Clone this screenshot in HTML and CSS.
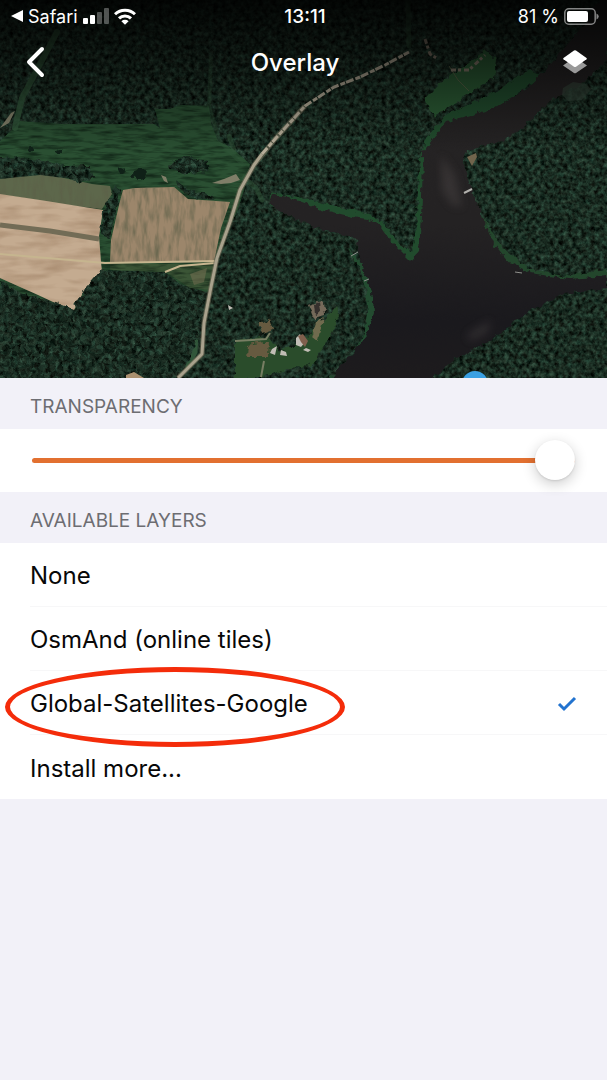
FILE: index.html
```html
<!DOCTYPE html>
<html lang="en">
<head>
<meta charset="utf-8">
<meta name="viewport" content="width=device-width, initial-scale=1">
<title>Overlay</title>
<link rel="stylesheet" href="styles.css">
</head>
<body>
<header class="hero">
  <svg class="map" viewBox="0 0 607 378" preserveAspectRatio="xMidYMid slice" aria-hidden="true">
    <defs>
      <filter id="trees" x="0" y="0" width="100%" height="100%" color-interpolation-filters="sRGB">
        <feTurbulence type="fractalNoise" baseFrequency="0.22" numOctaves="3" seed="8"/>
        <feColorMatrix values="0.06 0.3 0 0 -0.08  0 0.46 0 0 -0.06  0 0.38 0 0 -0.06  0 0 0 0 1"/>
        <feGaussianBlur stdDeviation="0.5"/>
        <feComposite in2="SourceGraphic" operator="in"/>
      </filter>
      <filter id="grass" x="0" y="0" width="100%" height="100%" color-interpolation-filters="sRGB">
        <feTurbulence type="fractalNoise" baseFrequency="0.05 0.28" numOctaves="3" seed="3" result="n"/>
        <feColorMatrix in="n" values="0 0 0 0 0.04  0 0 0 0 0.1  0 0 0 0 0.06  1.6 0 0 0 -0.66" result="d"/>
        <feComposite in="d" in2="SourceGraphic" operator="in" result="c"/>
        <feMerge><feMergeNode in="SourceGraphic"/><feMergeNode in="c"/></feMerge>
      </filter>
      <filter id="soil" x="0" y="0" width="100%" height="100%" color-interpolation-filters="sRGB">
        <feTurbulence type="fractalNoise" baseFrequency="0.025 0.1" numOctaves="3" seed="12"/>
        <feColorMatrix values="0 0 0 0 0.58  0 0 0 0 0.46  0 0 0 0 0.35  1.3 0 0 0 -0.55" result="d"/>
        <feComposite in="d" in2="SourceGraphic" operator="in" result="c"/>
        <feMerge><feMergeNode in="SourceGraphic"/><feMergeNode in="c"/></feMerge>
      </filter>
      <filter id="crop" x="0" y="0" width="100%" height="100%" color-interpolation-filters="sRGB">
        <feTurbulence type="fractalNoise" baseFrequency="0.2 0.05" numOctaves="3" seed="5"/>
        <feColorMatrix values="0 0 0 0 0.36  0 0 0 0 0.37  0 0 0 0 0.28  1.5 0 0 0 -0.6" result="d"/>
        <feComposite in="d" in2="SourceGraphic" operator="in" result="c"/>
        <feMerge><feMergeNode in="SourceGraphic"/><feMergeNode in="c"/></feMerge>
      </filter>
      <filter id="rough" x="-5%" y="-5%" width="110%" height="110%" color-interpolation-filters="sRGB">
        <feTurbulence type="fractalNoise" baseFrequency="0.16" numOctaves="2" seed="2"/>
        <feDisplacementMap in="SourceGraphic" scale="7" xChannelSelector="R" yChannelSelector="G"/>
      </filter>
      <filter id="soft"><feGaussianBlur stdDeviation="4"/></filter>
      <linearGradient id="shade" x1="0" y1="0" x2="0" y2="1">
        <stop offset="0" stop-color="#000" stop-opacity=".88"/>
        <stop offset=".45" stop-color="#000" stop-opacity=".5"/>
        <stop offset="1" stop-color="#000" stop-opacity="0"/>
      </linearGradient>
      <linearGradient id="depth" x1="0" y1="0" x2="0" y2="1">
        <stop offset="0" stop-color="#262424"/>
        <stop offset=".6" stop-color="#242223"/>
        <stop offset=".85" stop-color="#1a191d"/>
        <stop offset="1" stop-color="#1d1b1d"/>
      </linearGradient>
    </defs>

    <rect width="607" height="378" fill="#14271f" filter="url(#trees)"/>

    <!-- meadow -->
    <g filter="url(#grass)">
      <path fill="#2a4f32" d="M0 141 14 128 20 121 60 124 154 124 160 128 155 109 170 109 180 105 209 106 211 123 218 141 232 148 250 164 244 190 237 212 222 240 212 290 206 292 180 284 165 272 108 270 73 312 66 318 30 306 0 292 0 184 80 177 50 162 0 158Z"/>
    </g>
    <g fill="none" stroke="#31563a" stroke-linecap="round">
      <path stroke-width="6" opacity=".8" d="M57 32 22 98 15 128"/>
      <path stroke-width="4" opacity=".35" d="M211 58 209 106 219 140 242 164"/>
      <path stroke-width="5" opacity=".55" d="M408 0 409 46"/>
      <path stroke-width="5" opacity=".5" d="M244 178 256 188 262 200 M229 136 234 150"/>
      <path stroke-width="5" d="M196 330 195 352 188 366"/>
    </g>
    <path fill="#7f7e68" d="m212 183 12-4 12-5 4 6-9 3-10 1ZM161 175l5 2 2 6-4-2ZM11 113l4-2-6 12-9 5Z"/>

    <!-- farm fields -->
    <path fill="#5d674b" filter="url(#crop)" d="M0 179 40 175 64 178 92 184 110 186 112 194 102 209 60 204 0 194Z"/>
    <path fill="#c4ab90" filter="url(#soil)" d="M0 194 40 200 103 210 99 236 101 262 102 272 85 289 74 310 66 308 38 295 0 278Z"/>
    <path fill="none" stroke="#726c56" stroke-width="5" d="M0 225 50 231 99 239"/>
    <path fill="#9c866b" filter="url(#crop)" d="M123 190 135 188 174 187 188 199 230 202 221 228 214 262 110 263 111 240 119 205Z"/>
    <path fill="#3b5536" filter="url(#grass)" d="M110 264 214 264 211 290 190 288 166 272 110 270Z"/>
    <path fill="#7c7456" d="M190 274 207 268 204 282 194 285Z" opacity=".5"/>
    <path fill="none" stroke="#c6b58f" stroke-width="2" d="M0 254 105 263 216 261 M165 272 180 266 215 263"/>

    <!-- tree lines and hedges -->
    <g filter="url(#rough)">
      <g filter="url(#trees)">
        <path d="M0 158 22 157 43 161 66 166 90 165 94 178 80 183 60 175 35 171 0 176Z"/>
        <path d="M167 165 187 156 207 161 209 172 188 174 170 170Z"/>
        <path d="M176 179 190 191 214 195 213 200 194 198 178 188Z"/>
        <path d="M116 187 120 191 116 212 109 238 101 235 103 211Z"/>
        <path d="M0 282 28 296 55 302 73 309 86 287 102 269 115 273 148 274 163 276 177 288 209 293 200 330 189 359 169 378 0 378Z"/>
      </g>
      <g fill="#0f2017"><ellipse cx="121" cy="170" rx="4" ry="3"/><ellipse cx="139" cy="174" rx="7" ry="5"/><ellipse cx="60" cy="151" rx="3" ry="2"/><ellipse cx="31" cy="150" rx="3" ry="2"/></g>
    </g>
    <path fill="#aa9070" d="M126 375 134 372 144 378 126 378Z"/>

    <!-- shore vegetation and lake -->
    <g filter="url(#rough)">
      <path fill="#214b2d" d="M271 192 305 198 342 208 365 213 384 222 401 246 412 252 417 220 419 164 426 139 446 115 490 94 529 70 543 76 500 105 458 126 430 152 424 180 422 259 414 266 400 260 370 228 330 225 270 207Z"/>
      <path fill="#23462c" d="M461 150 466 190 482 215 502 247 529 269 563 276 607 270 607 279 560 284 525 278 498 260 480 231 463 192Z"/>
      <path fill="#234b30" d="M347 246 362 274 368 305 364 335 342 368 329 378 342 378 368 345 376 310 367 270Z"/>
    </g>
    <path fill="url(#depth)" filter="url(#rough)" d="M273 194 290 198 320 209 353 217 367 219 379 224 390 240 411 261 419 252 422 198 423 152 446 122 492 109 528 88 552 63 578 32 607 -10 607 60 579 86 552 100 522 129 502 141 467 151 463 164 472 192 483 218 494 244 510 263 530 273 569 279 607 276 607 288 564 294 527 312 493 339 457 358 431 380 330 380 351 354 366 336 374 312 372 290 361 263 356 243 359 238 325 231 279 211 269 205Z"/>
    <path fill="#514c4b" filter="url(#soft)" opacity=".4" d="M441 155 455 175 462 207 452 205 442 190Z M468 334 491 320 487 333 469 341Z"/>
    <path fill="#34463a" opacity=".7" d="m563 88 10-6 13 2 5 5-9 11-14 1-6-6Z"/>
    <path fill="#71644c" d="m467 157 9-4 1 4-5 9Z"/>

    <!-- clearing north of the lake -->
    <path fill="#2b5a34" filter="url(#rough)" d="M425 99 450 74 461 68 486 50 496 59 494 78 433 117Z"/>
    <path fill="none" stroke="#546044" d="M449 66 458 80 469 91"/>
    <path fill="none" stroke="#857a6b" stroke-width="3" stroke-dasharray="5 2 3 3" d="M425 39 430 54 438 59 M451 70 469 70 485 55"/>

    <!-- road -->
    <path fill="none" stroke="#6c6a55" stroke-width="5" stroke-linejoin="round" opacity=".7" d="M178 378 191 365 202 354 204 323 211 287 217 258 230 222 240 190 254 165 276 138 305 106"/>
    <path fill="none" stroke="#a8a18c" stroke-width="3" stroke-linejoin="round" d="M178 378 191 365 202 354 204 323 211 287 217 258 230 222 240 190 254 165 262 154"/>
    <path fill="none" stroke="#b5ac98" stroke-width="3" stroke-dasharray="8 2 5 1" d="M262 154 276 138 305 106 334 87 360 77 385 65 409 52"/>

    <!-- farmstead -->
    <g filter="url(#rough)">
      <path fill="#2a4c2b" d="M235 341 270 337 279 351 298 344 326 319 337 306 339 315 326 344 310 366 290 368 260 378 235 378Z"/>
      <path fill="#665a40" d="M248 345 269 341 268 357 247 357Z M259 324l10-5 4 11-11 4Z"/>
      <path fill="#706b4e" d="m316 323 8-6-7 24-5-4Z"/>
      <path fill="#756a5a" d="m309 306 15-5 1 14-11 3Z"/>
      <path fill="#35302d" d="m314 305 6-2 1 8-6 3Z"/>
    </g>
    <path fill="none" stroke="#777e63" stroke-width="2" d="M235 341 266 339 270 333 M264 361 261 377"/>
    <path fill="#c1bdb5" d="m272 349 5-3-2 9-5-2Zm9 1 5 2 1 4-7-1Zm15-12 4-4 2 5 4 2-5 6-5-2Zm10 10 5 2-3 2-5-2ZM228 305l5 3-4 2Z"/>
    <path fill="#805f4d" d="m298 336 5-2 5 7-3 6-4-5Z"/>
    <path fill="none" stroke="#b1b0ac" stroke-width="2" d="m464 193 8-4"/>
    <path fill="none" stroke="#8f908c" d="M351 256l7-4M364 281l5-2M515 272l7 1"/>
    <circle cx="475" cy="384" r="13" fill="#3aa0e3"/>
    <rect width="607" height="150" fill="url(#shade)"/>
  </svg>

  <div class="status">
    <div class="status-side">
      <svg width="12" height="12" viewBox="0 0 12 12" aria-hidden="true"><path fill="#fff" d="M0 6 12 0v12Z"/></svg>
      <span>Safari</span>
      <svg width="26" height="16" viewBox="0 0 26 16" aria-label="Signal strength" role="img"><g fill="#fff"><rect x="0" y="10" width="5" height="6" rx="1"/><rect x="7" y="7" width="5" height="9" rx="1"/><g opacity=".3"><rect x="14" y="4" width="5" height="12" rx="1"/><rect x="21" y="0" width="5" height="16" rx="1"/></g></g></svg>
      <svg width="22" height="17" viewBox="0 0 22 17" role="img" aria-label="Wi-Fi"><g fill="none" stroke="#fff" stroke-width="3"><path d="M1 6.3a14.2 14.2 0 0 1 20 0"/><path d="M5 10.4a8.5 8.5 0 0 1 12 0"/></g><path fill="#fff" d="M7.4 13.2a5.1 5.1 0 0 1 7.2 0L11 16.8Z"/></svg>
    </div>
    <time class="clock">13:11</time>
    <div class="status-side status-end">
      <span>81 %</span>
      <svg width="35" height="17" viewBox="0 0 35 17" role="img" aria-label="Battery"><rect x=".8" y=".8" width="30.4" height="15.4" rx="4" fill="none" stroke="#fff" stroke-opacity=".5" stroke-width="1.5"/><rect x="3" y="3" width="21" height="11" rx="2" fill="#fff"/><path fill="#fff" fill-opacity=".5" d="M32.5 5.5q2.2 1 2.2 3t-2.2 3Z"/></svg>
    </div>
  </div>
  <nav class="navbar">
    <button class="nav-button" type="button" aria-label="Back"><svg width="20" height="32" viewBox="0 0 20 32"><path fill="none" stroke="#fff" stroke-width="4" stroke-linecap="round" stroke-linejoin="round" d="M16 3 3 16l13 13"/></svg></button>
    <h1 class="title">Overlay</h1>
    <button class="nav-button nav-end" type="button" aria-label="Layers"><svg width="26" height="26" viewBox="0 0 26 26"><path fill="#999" d="M1 16.5 13 8l12 8.500L14 24q-1 .7-2 0Z"/><path fill="#fff" d="M12 1.500q1-.7 2 0l10.500 7.500q.8.6 0 1.200L14 17.700q-1 .7-2 0L1.500 10.200q-.8-.6 0-1.200Z"/></svg></button>
  </nav>
</header>

<main>
  <section>
    <h2 class="section-title"><label for="transparency">TRANSPARENCY</label></h2>
    <div class="slider-row"><input class="slider" id="transparency" type="range" min="0" max="100" value="100"></div>
  </section>
  <section>
    <h2 class="section-title" id="layers-title">AVAILABLE LAYERS</h2>
    <div class="list" role="group" aria-labelledby="layers-title">
      <label class="row"><span class="row-body">None<input class="choice" type="radio" name="layer"><svg class="tick" width="20" height="16" viewBox="0 0 20 16" aria-hidden="true"><path d="m2 8 5 5L18 2"/></svg></span></label>
      <label class="row"><span class="row-body">OsmAnd (online tiles)<input class="choice" type="radio" name="layer"><svg class="tick" width="20" height="16" viewBox="0 0 20 16" aria-hidden="true"><path d="m2 8 5 5L18 2"/></svg></span></label>
      <label class="row marked"><span class="row-body">Global-Satellites-Google<input class="choice" type="radio" name="layer" checked><svg class="tick" width="20" height="16" viewBox="0 0 20 16" aria-hidden="true"><path d="m2 8 5 5L18 2"/></svg></span></label>
      <button class="row" type="button"><span class="row-body">Install more...</span></button>
    </div>
  </section>
</main>
</body>
</html>
```

FILE: styles.css
```css
*,
*::after { box-sizing: border-box; }

body {
  margin: 0;
  min-height: 100vh;
  background: #f2f1f8;
  color: #080808;
  font-family: Inter, "Liberation Sans", sans-serif;
  font-size: 24px;
}

button {
  border: 0;
  padding: 0;
  background: none;
  color: inherit;
  font: inherit;
}

svg { display: block; flex: none; }

.hero {
  position: relative;
  min-height: 378px;
  overflow: hidden;
  background: #14271f;
  color: #fff;
}

.map {
  position: absolute;
  inset: 0;
  width: 100%;
  height: 100%;
}

.status,
.navbar {
  position: relative;
  display: grid;
  grid-template-columns: 1fr auto 1fr;
  align-items: center;
}

.status {
  height: 32px;
  padding: 0 8px 0 11px;
  font-size: 18px;
}

.status-side {
  display: flex;
  align-items: center;
  gap: 5px;
}

.status-end { justify-content: flex-end; }

.clock {
  font-size: 19px;
  font-weight: 500;
}

.navbar {
  height: 60px;
  padding: 0 19px 0 26px;
}

.nav-button { justify-self: start; }
.nav-end { justify-self: end; }

.title {
  margin: 0 24px 0 0;
  font-size: 24px;
  font-weight: 500;
}

.section-title {
  margin: 0;
  padding: 17px 30px 10px;
  color: #6d6d72;
  font-size: 19px;
  font-weight: 400;
  line-height: 24px;
}

.slider-row {
  display: flex;
  align-items: center;
  height: 63px;
  padding: 0 32px;
  background: #fff;
}

.slider {
  appearance: none;
  width: 100%;
  height: 40px;
  margin: 0;
  background: none;
}

.slider::-webkit-slider-runnable-track {
  height: 5px;
  border-radius: 3px;
  background: #e27030;
}

.slider::-webkit-slider-thumb {
  appearance: none;
  width: 40px;
  height: 40px;
  margin-top: -18px;
  border-radius: 50%;
  background: #fff;
  box-shadow: 0 4px 14px rgba(0, 0, 0, .2), 0 1px 2px rgba(0, 0, 0, .1);
}

.list { background: #fff; }

.row {
  position: relative;
  display: block;
  width: 100%;
  padding-left: 30px;
  text-align: left;
}

.row-body {
  display: flex;
  align-items: center;
  justify-content: space-between;
  height: 64px;
  padding: 2px 30px 0 0;
  border-bottom: 1px solid #f7f7f8;
}

.row:last-child .row-body { border-bottom: 0; }

.choice {
  appearance: none;
  position: absolute;
  inset: 0;
  margin: 0;
}

.tick {
  display: none;
  fill: none;
  stroke: #2273cf;
  stroke-width: 3;
}

.choice:checked + .tick { display: block; }

.marked::after {
  content: "";
  position: absolute;
  top: -4px;
  left: 5px;
  width: 340px;
  height: 80px;
  border: 5px solid #f42c0a;
  border-radius: 50%;
  pointer-events: none;
}
```
